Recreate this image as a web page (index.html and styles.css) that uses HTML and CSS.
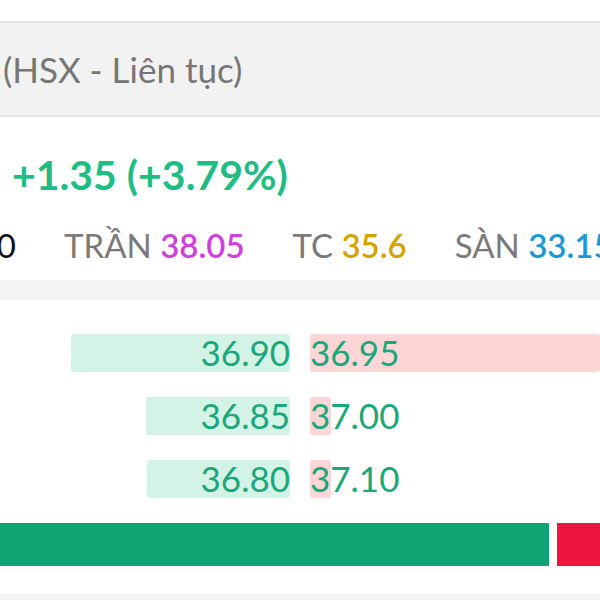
FILE: index.html
```html
<!DOCTYPE html>
<html lang="vi">
<head>
<meta charset="utf-8">
<link rel="stylesheet" href="styles.css">
</head>
<body>
<div class="screen">
  <div class="top-gap"></div>
  <div class="exchange">(HSX - Liên tục)</div>
  <div class="change">+1.35 (+3.79%)</div>
  <div class="refs">
    <span class="prev">0</span>
    <span class="ref"><span class="lbl">TRẦN</span> <span class="ceil">38.05</span></span>
    <span class="ref"><span class="lbl">TC</span> <span class="basic">35.6</span></span>
    <span class="ref"><span class="lbl">SÀN</span> <span class="floor">33.15</span></span>
  </div>
  <div class="divider"></div>
  <div class="book">
    <div class="row">
      <div class="bid"><div class="bid-box" style="width:219px">36.90</div></div>
      <div class="ask"><div class="ask-box" style="width:290px">36.95</div></div>
    </div>
    <div class="row">
      <div class="bid"><div class="bid-box" style="width:144px">36.85</div></div>
      <div class="ask"><div class="ask-box" style="width:21px">37.00</div></div>
    </div>
    <div class="row">
      <div class="bid"><div class="bid-box" style="width:143px">36.80</div></div>
      <div class="ask"><div class="ask-box" style="width:21px">37.10</div></div>
    </div>
  </div>
  <div class="ratio">
    <div class="buy"></div>
    <div class="sell"></div>
  </div>
  <div class="footer-band"></div>
</div>
</body>
</html>
```

FILE: styles.css
```css
html, body {
  margin: 0;
  padding: 0;
  background: #ffffff;
}
.screen {
  width: 600px;
  height: 600px;
  overflow: hidden;
  font-family: Lato, "Noto Sans", sans-serif;
}
.top-gap {
  height: 21px;
}
.exchange {
  height: 92px;
  background: #f2f2f2;
  border-top: 2px solid #e5e5e5;
  border-bottom: 2px solid #e5e5e5;
  display: flex;
  align-items: center;
  padding-left: 3px;
  font-size: 35px;
  color: #767676;
  white-space: nowrap;
}
.change {
  height: 100px;
  display: flex;
  align-items: center;
  padding-left: 12px;
  padding-top: 14px;
  box-sizing: border-box;
  font-size: 41px;
  font-weight: 700;
  color: #1fbd84;
  white-space: nowrap;
}
.refs {
  height: 46px;
  padding-top: 5px;
  padding-bottom: 7px;
  display: flex;
  align-items: center;
  gap: 48px;
  font-size: 33px;
  white-space: nowrap;
}
.prev {
  color: #111;
  width: 16px;
  direction: rtl;
  overflow: visible;
}
.lbl {
  color: #7a7a7a;
}
.ceil { color: #d03fe0; font-weight: 600; }
.basic { color: #d4a300; font-weight: 600; }
.floor { color: #1a98d5; font-weight: 600; }
.divider {
  height: 20px;
  margin-top: 5px;
  background: #f4f4f4;
}
.book {
  padding-top: 34px;
  display: flex;
  flex-direction: column;
  gap: 25px;
}
.row {
  display: flex;
  gap: 20px;
  height: 38px;
}
.bid, .ask {
  width: 290px;
  display: flex;
}
.bid {
  justify-content: flex-end;
}
.bid-box, .ask-box {
  height: 38px;
  line-height: 37px;
  font-size: 35px;
  color: #1aa77a;
  white-space: nowrap;
  border-radius: 3px;
}
.bid-box {
  background: #d4f3e7;
  text-align: right;
  direction: rtl;
}
.ask-box {
  background: #ffd5d6;
  overflow: visible;
}
.ratio {
  margin-top: 25px;
  height: 43px;
  display: flex;
  gap: 8px;
}
.buy {
  width: 549px;
  background: #0ea473;
}
.sell {
  flex: 1;
  background: #ee1540;
}
.footer-band {
  margin-top: 28px;
  height: 10px;
  background: #f4f4f4;
}
```
